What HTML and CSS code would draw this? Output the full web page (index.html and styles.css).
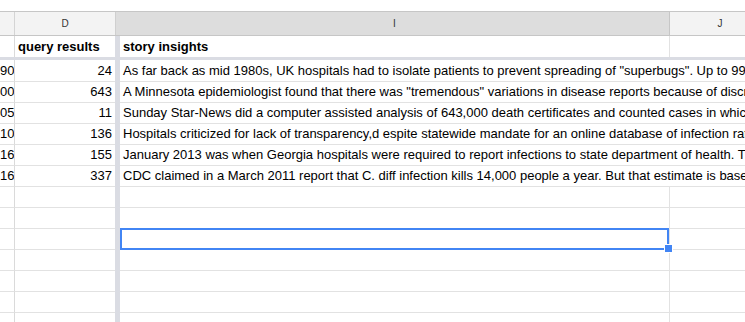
FILE: index.html
```html
<!DOCTYPE html>
<html>
<head>
<meta charset="utf-8">
<link rel="stylesheet" href="styles.css">
</head>
<body>
<div class="sheet">
  <div class="colhdr">
    <div class="c"></div>
    <div class="d">D</div>
    <div class="i">I</div>
    <div class="j">J</div>
  </div>
  <div class="row first">
    <div class="cell c"></div>
    <div class="cell d left">query results</div>
    <div class="cell fz"></div>
    <div class="cell i">story insights</div>
    <div class="cell j"></div>
  </div>
  <div class="hfreeze"></div>
  <div class="row r1">
    <div class="cell c">90</div>
    <div class="cell d">24</div>
    <div class="cell fz"></div>
    <div class="cell i ov">As far back as mid 1980s, UK hospitals had to isolate patients to prevent spreading of "superbugs". Up to 99% of staph infections</div>
    <div class="cell j"></div>
  </div>
  <div class="row">
    <div class="cell c">00</div>
    <div class="cell d">643</div>
    <div class="cell fz"></div>
    <div class="cell i ov">A Minnesota epidemiologist found that there was "tremendous" variations in disease reports because of discrepancies</div>
    <div class="cell j"></div>
  </div>
  <div class="row">
    <div class="cell c">05</div>
    <div class="cell d">11</div>
    <div class="cell fz"></div>
    <div class="cell i ov">Sunday Star-News did a computer assisted analysis of 643,000 death certificates and counted cases in which infections</div>
    <div class="cell j"></div>
  </div>
  <div class="row">
    <div class="cell c">10</div>
    <div class="cell d">136</div>
    <div class="cell fz"></div>
    <div class="cell i ov">Hospitals criticized for lack of transparency,d espite statewide mandate for an online database of infection rates</div>
    <div class="cell j"></div>
  </div>
  <div class="row">
    <div class="cell c">16</div>
    <div class="cell d">155</div>
    <div class="cell fz"></div>
    <div class="cell i ov">January 2013 was when Georgia hospitals were required to report infections to state department of health. The data</div>
    <div class="cell j"></div>
  </div>
  <div class="row">
    <div class="cell c">16</div>
    <div class="cell d">337</div>
    <div class="cell fz"></div>
    <div class="cell i ov">CDC claimed in a March 2011 report that C. diff infection kills 14,000 people a year. But that estimate is based on</div>
    <div class="cell j"></div>
  </div>
  <div class="row"><div class="cell c"></div><div class="cell d"></div><div class="cell fz"></div><div class="cell i"></div><div class="cell j"></div></div>
  <div class="row"><div class="cell c"></div><div class="cell d"></div><div class="cell fz"></div><div class="cell i"></div><div class="cell j"></div></div>
  <div class="row"><div class="cell c"></div><div class="cell d"></div><div class="cell fz"></div><div class="cell i sel"><div class="selbox"></div><div class="handle"></div></div><div class="cell j"></div></div>
  <div class="row"><div class="cell c"></div><div class="cell d"></div><div class="cell fz"></div><div class="cell i"></div><div class="cell j"></div></div>
  <div class="row"><div class="cell c"></div><div class="cell d"></div><div class="cell fz"></div><div class="cell i"></div><div class="cell j"></div></div>
  <div class="row"><div class="cell c"></div><div class="cell d"></div><div class="cell fz"></div><div class="cell i"></div><div class="cell j"></div></div>
  <div class="row"><div class="cell c"></div><div class="cell d"></div><div class="cell fz"></div><div class="cell i"></div><div class="cell j"></div></div>
</div>
</body>
</html>
```

FILE: styles.css
```css
html, body {
  margin: 0;
  background: #fff;
}
body {
  width: 745px;
  height: 322px;
  overflow: hidden;
  font-family: "Liberation Sans", Arial, sans-serif;
  font-size: 13px;
  color: #000;
}
.sheet {
  padding-top: 11px;
  width: 900px;
}
.colhdr {
  display: flex;
  height: 25px;
  box-sizing: border-box;
  border-top: 1px solid #c6c6c6;
  border-bottom: 1px solid #c6c6c6;
  background: #f3f3f3;
  font-size: 10px;
  line-height: 23px;
  color: #333;
  text-align: center;
}
.colhdr > div {
  flex: none;
}
.colhdr .c {
  width: 14px;
  border-right: 1px solid #d4d4d4;
}
.colhdr .d {
  width: 100px;
  border-right: 1px solid #cfcfcf;
}
.colhdr .i {
  width: 549px;
  padding-left: 4px;
  background: #dddddd;
  border-right: 1px solid #c6c6c6;
}
.colhdr .j {
  width: 100px;
}
.row {
  display: flex;
  height: 21px;
}
.row.r1 {
  height: 22px;
}
.cell {
  flex: none;
  box-sizing: border-box;
  height: 100%;
  border-bottom: 1px solid #e2e2e2;
  line-height: 20px;
  white-space: nowrap;
}
.row.r1 .cell {
  line-height: 21px;
}
.cell.c {
  width: 15px;
  border-right: 1px solid #dadada;
  padding-right: 3px;
  text-align: right;
  overflow: hidden;
}
.cell.d {
  width: 100px;
  padding-right: 3px;
  text-align: right;
}
.cell.d.left {
  text-align: left;
  padding-left: 3px;
}
.cell.fz {
  width: 5px;
  border-bottom: none;
  background: #dadce3;
}
.cell.i {
  width: 550px;
  padding-left: 3px;
  border-right: 1px solid #e2e2e2;
}
.cell.i.ov {
  border-right: none;
}
.cell.j {
  width: 100px;
}
.row.first .cell {
  border-bottom: none;
  font-weight: bold;
  line-height: 21px;
}
.row.first .cell.i {
  border-right: 1px solid #e2e2e2;
}
.hfreeze {
  height: 3px;
  background: #dadce3;
}
.cell.sel {
  position: relative;
}
.selbox {
  position: absolute;
  top: -1px;
  left: 0;
  right: 0;
  bottom: -1px;
  border: 2px solid #4285f4;
}
.handle {
  position: absolute;
  right: -4px;
  bottom: -4px;
  width: 9px;
  height: 9px;
  box-sizing: border-box;
  background: #4285f4;
  border: 1px solid #fff;
}
```
